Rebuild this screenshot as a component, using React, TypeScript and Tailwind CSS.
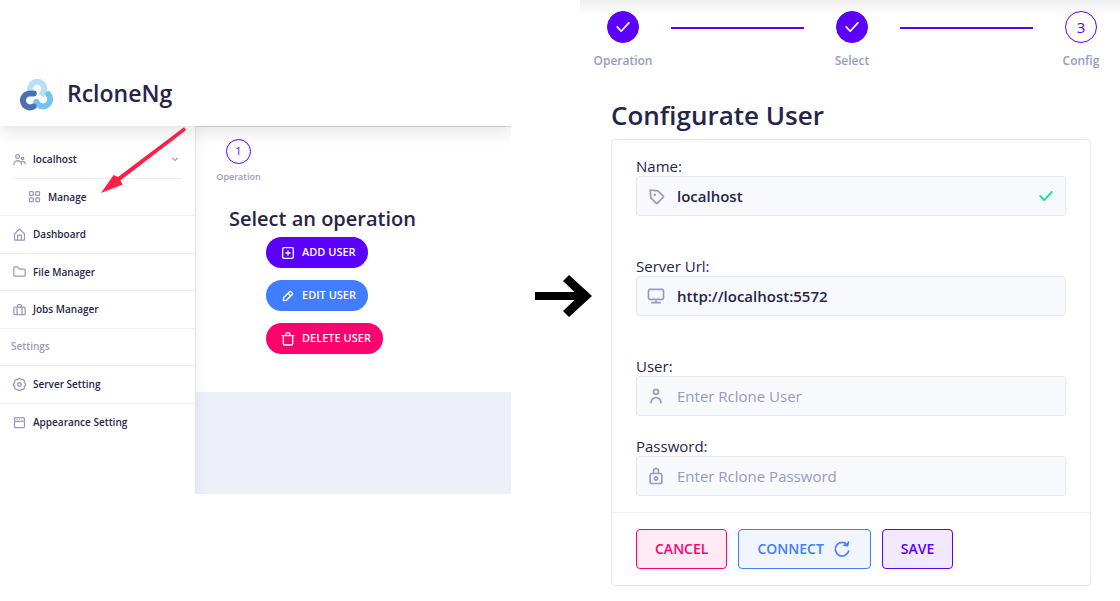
import type { ReactNode } from "react";

const icons = {
  people:
    "M9 11a4 4 0 1 0-4-4 4 4 0 0 0 4 4zm0-6a2 2 0 1 1-2 2 2 2 0 0 1 2-2zm8 8a3 3 0 1 0-3-3 3 3 0 0 0 3 3zm0-4a1 1 0 1 1-1 1 1 1 0 0 1 1-1zm0 5a5 5 0 0 0-3.06 1.05A7 7 0 0 0 2 20a1 1 0 0 0 2 0 5 5 0 0 1 10 0 1 1 0 0 0 2 0 6.9 6.9 0 0 0-.86-3.35A3 3 0 0 1 20 19a1 1 0 0 0 2 0 5 5 0 0 0-5-5z",
  grid: "M9 3H5a2 2 0 0 0-2 2v4a2 2 0 0 0 2 2h4a2 2 0 0 0 2-2V5a2 2 0 0 0-2-2zM5 9V5h4v4zM19 3h-4a2 2 0 0 0-2 2v4a2 2 0 0 0 2 2h4a2 2 0 0 0 2-2V5a2 2 0 0 0-2-2zm-4 6V5h4v4zM9 13H5a2 2 0 0 0-2 2v4a2 2 0 0 0 2 2h4a2 2 0 0 0 2-2v-4a2 2 0 0 0-2-2zm-4 6v-4h4v4zM19 13h-4a2 2 0 0 0-2 2v4a2 2 0 0 0 2 2h4a2 2 0 0 0 2-2v-4a2 2 0 0 0-2-2zm-4 6v-4h4v4z",
  home: "M20.42 10.18L12.71 2.3a1 1 0 0 0-1.42 0l-7.71 7.89A2 2 0 0 0 3 11.62V20a2 2 0 0 0 1.89 2h14.22A2 2 0 0 0 21 20v-8.38a2.07 2.07 0 0 0-.58-1.44zM10 20v-6h4v6zm9 0h-3v-7a1 1 0 0 0-1-1H9a1 1 0 0 0-1 1v7H5v-8.42l7-7.15 7 7.19z",
  folder:
    "M19.5 20.5h-15A2.47 2.47 0 0 1 2 18.07V5.93A2.47 2.47 0 0 1 4.5 3.5h4.6a1 1 0 0 1 .77.37l2.6 3.18h7A2.47 2.47 0 0 1 22 9.48v8.59a2.47 2.47 0 0 1-2.5 2.43zM4 13.76v4.31a.46.46 0 0 0 .5.43h15a.46.46 0 0 0 .5-.43V9.48a.46.46 0 0 0-.5-.43H12a1 1 0 0 1-.77-.37L8.63 5.5H4.5a.46.46 0 0 0-.5.43z",
  briefcase:
    "M19 7h-3V5.5A2.5 2.5 0 0 0 13.5 3h-3A2.5 2.5 0 0 0 8 5.5V7H5a3 3 0 0 0-3 3v8a3 3 0 0 0 3 3h14a3 3 0 0 0 3-3v-8a3 3 0 0 0-3-3zm-4 2v10H9V9zm-5-3.5a.5.5 0 0 1 .5-.5h3a.5.5 0 0 1 .5.5V7h-4zM4 18v-8a1 1 0 0 1 1-1h2v10H5a1 1 0 0 1-1-1zm16 0a1 1 0 0 1-1 1h-2V9h2a1 1 0 0 1 1 1z",
  browser:
    "M18 3H6a3 3 0 0 0-3 3v12a3 3 0 0 0 3 3h12a3 3 0 0 0 3-3V6a3 3 0 0 0-3-3zM6 5h12a1 1 0 0 1 1 1v3H5V6a1 1 0 0 1 1-1zm12 14H6a1 1 0 0 1-1-1v-7h14v7a1 1 0 0 1-1 1zM8 6a1 1 0 1 0 0 2 1 1 0 0 0 0-2zM12 6a1 1 0 1 0 0 2 1 1 0 0 0 0-2z",
  tag: "M12.87 22a1.84 1.84 0 0 1-1.29-.53l-6.41-6.42a1 1 0 0 1-.29-.61L4 5.09a1 1 0 0 1 .29-.8 1 1 0 0 1 .8-.29l9.35.88a1 1 0 0 1 .61.29l6.42 6.41a1.82 1.82 0 0 1 0 2.57l-7.32 7.32a1.82 1.82 0 0 1-1.28.53zm-6-8.11l6 6 7.05-7.05-6-6-7.81-.73zM10.5 9a1.5 1.5 0 1 0 0 3 1.5 1.5 0 0 0 0-3z",
  monitor:
    "M19 3H5a3 3 0 0 0-3 3v8a3 3 0 0 0 3 3h6v2H7a1 1 0 0 0 0 2h10a1 1 0 0 0 0-2h-4v-2h6a3 3 0 0 0 3-3V6a3 3 0 0 0-3-3zm1 11a1 1 0 0 1-1 1H5a1 1 0 0 1-1-1V6a1 1 0 0 1 1-1h14a1 1 0 0 1 1 1z",
  person:
    "M12 11a4 4 0 1 0-4-4 4 4 0 0 0 4 4zm0-6a2 2 0 1 1-2 2 2 2 0 0 1 2-2zm0 8a7 7 0 0 0-7 7 1 1 0 0 0 2 0 5 5 0 0 1 10 0 1 1 0 0 0 2 0 7 7 0 0 0-7-7z",
  lock: "M17 8h-1V6.11a4 4 0 1 0-8 0V8H7a3 3 0 0 0-3 3v8a3 3 0 0 0 3 3h10a3 3 0 0 0 3-3v-8a3 3 0 0 0-3-3zm-7-1.89A2.06 2.06 0 0 1 12 4a2.06 2.06 0 0 1 2 2.11V8h-4zM18 19a1 1 0 0 1-1 1H7a1 1 0 0 1-1-1v-8a1 1 0 0 1 1-1h10a1 1 0 0 1 1 1zM12 12a3 3 0 1 0 3 3 3 3 0 0 0-3-3zm0 4a1 1 0 1 1 1-1 1 1 0 0 1-1 1z",
  plusSquare:
    "M18 3H6a3 3 0 0 0-3 3v12a3 3 0 0 0 3 3h12a3 3 0 0 0 3-3V6a3 3 0 0 0-3-3zm1 15a1 1 0 0 1-1 1H6a1 1 0 0 1-1-1V6a1 1 0 0 1 1-1h12a1 1 0 0 1 1 1zM15 11h-2V9a1 1 0 0 0-2 0v2H9a1 1 0 0 0 0 2h2v2a1 1 0 0 0 2 0v-2h2a1 1 0 0 0 0-2z",
  edit: "M19.4 7.34L16.66 4.6A2 2 0 0 0 14 4.53l-9 9a2 2 0 0 0-.57 1.21L4 18.91a1 1 0 0 0 .29.8A1 1 0 0 0 5 20h.09l4.17-.38a2 2 0 0 0 1.21-.57l9-9a1.92 1.92 0 0 0-.07-2.71zM9.08 17.62l-3 .28.27-3L12 9.32l2.7 2.7zM16 10.68L13.32 8l1.95-2L18 8.73z",
  trash:
    "M21 6h-5V4.33A2.42 2.42 0 0 0 13.5 2h-3A2.42 2.42 0 0 0 8 4.33V6H3a1 1 0 0 0 0 2h1v11a3 3 0 0 0 3 3h10a3 3 0 0 0 3-3V8h1a1 1 0 0 0 0-2zM10 4.33c0-.16.21-.33.5-.33h3c.29 0 .5.17.5.33V6h-4zM18 19a1 1 0 0 1-1 1H7a1 1 0 0 1-1-1V8h12z",
  check:
    "M9.86 18a1 1 0 0 1-.73-.32l-4.86-5.17a1 1 0 1 1 1.46-1.37l4.12 4.39 8.41-9.2a1 1 0 1 1 1.48 1.34l-9.14 10a1 1 0 0 1-.73.33z",
  chevron:
    "M12 15.5a1 1 0 0 1-.71-.29l-4-4a1 1 0 1 1 1.42-1.42L12 13.1l3.3-3.18a1 1 0 1 1 1.38 1.44l-4 3.86a1 1 0 0 1-.68.28z",
};

type IconName = keyof typeof icons;

function Icon({ name, className }: { name: IconName; className: string }) {
  return (
    <svg viewBox="0 0 24 24" fill="currentColor" fillRule="evenodd" aria-hidden="true" className={className}>
      <path d={icons[name]} />
    </svg>
  );
}

function Gear({ className }: { className: string }) {
  return (
    <svg viewBox="1 1 22 22" fill="none" stroke="currentColor" strokeWidth="2" strokeLinejoin="round" aria-hidden="true" className={className}>
      <path d="M19.02 9.09A3.1 3.1 0 0 1 19.02 14.91 3.1 3.1 0 0 1 14.91 19.02 3.1 3.1 0 0 1 9.09 19.02 3.1 3.1 0 0 1 4.98 14.91 3.1 3.1 0 0 1 4.98 9.09 3.1 3.1 0 0 1 9.09 4.98 3.1 3.1 0 0 1 14.91 4.98 3.1 3.1 0 0 1 19.02 9.09z" />
      <circle cx="12" cy="12" r="2.6" />
    </svg>
  );
}

function Refresh({ className }: { className: string }) {
  return (
    <svg viewBox="0 0 24 24" fill="none" stroke="currentColor" strokeWidth="2" strokeLinecap="round" strokeLinejoin="round" aria-hidden="true" className={className}>
      <path d="M20 14.4A8.15 8.15 0 1 1 18.6 7.2M14.5 7.3l4.3.7.8-4.2" />
    </svg>
  );
}

function Logo() {
  return (
    <svg viewBox="0 -1 34 33" fill="none" aria-hidden="true" className="h-[33px] w-[34px] shrink-0">
      <g strokeWidth="6" strokeLinejoin="round">
        <path d="M10.4 11.4A7 7 0 1 1 23.8 12.2L21.2 16.8" stroke="#b5e1f8" />
        <path d="M28.2 15.2A7.2 7.2 0 1 1 17.8 25.2L16.4 22.8" stroke="#73c4f1" strokeLinecap="round" />
        <path d="M13.8 14.4H10.4A7 7 0 1 0 13.6 27.4" stroke="#4a72b0" strokeLinecap="round" />
      </g>
    </svg>
  );
}

function MenuItem({ icon, label, nested, arrow, last }: { icon: ReactNode; label: string; nested?: boolean; arrow?: boolean; last?: boolean }) {
  return (
    <li className={arrow ? "pr-[13px] pl-3" : last ? "" : "border-b border-[#edeff7]"}>
      <a
        href="#"
        className={
          "flex h-full items-center gap-[6px] " +
          (nested ? "pl-[27px]" : arrow ? "border-b border-[#edeff7]" : "pl-3")
        }
      >
        <span className="text-[#989bbd]">{icon}</span>
        <span className="text-[10px] leading-4 font-semibold">{label}</span>
        {arrow && <Icon name="chevron" className="ml-auto size-[14px] text-[#989bbd]" />}
      </a>
    </li>
  );
}

function Sidebar() {
  const size = "size-[15px]";
  return (
    <nav className="z-[1] w-[196px] shrink-0 border-r border-[#e4e6f0] bg-white pt-[15px] shadow-[2px_0_10px_rgba(0,0,0,0.06)]">
      <ul className="grid h-[300px] grid-rows-8">
        <MenuItem arrow icon={<Icon name="people" className={size} />} label="localhost" />
        <MenuItem nested icon={<Icon name="grid" className={size} />} label="Manage" />
        <MenuItem icon={<Icon name="home" className={size} />} label="Dashboard" />
        <MenuItem icon={<Icon name="folder" className={size} />} label="File Manager" />
        <MenuItem icon={<Icon name="briefcase" className={size} />} label="Jobs Manager" />
        <li className="flex items-center border-b border-[#edeff7] pl-[11px] text-[10px] font-semibold text-[#989bbd]">Settings</li>
        <MenuItem icon={<Gear className={size} />} label="Server Setting" />
        <MenuItem last icon={<Icon name="browser" className={size} />} label="Appearance Setting" />
      </ul>
    </nav>
  );
}

function OperationButton({ icon, label, color }: { icon: IconName; label: string; color: string }) {
  return (
    <button type="button" className={"flex h-[31px] items-center gap-[6px] rounded-full pr-3 pl-[14px] text-[11px] font-semibold text-white " + color}>
      <Icon name={icon} className="size-4" />
      {label}
    </button>
  );
}

function Step({ label, children, done }: { label: string; children: ReactNode; done?: boolean }) {
  return (
    <li className="flex w-[60px] shrink-0 flex-col items-center gap-2">
      <span className={"flex size-8 items-center justify-center rounded-full border border-[#5b00ff] text-[15px] " + (done ? "bg-[#5b00ff] text-white" : "bg-white text-[#5b00ff]")}>
        {children}
      </span>
      <span className="text-[12px] leading-5 font-semibold text-[#989bbd]">{label}</span>
    </li>
  );
}

function Field({ id, label, icon, value, placeholder, type = "text", valid }: { id: string; label: string; icon: IconName; value?: string; placeholder?: string; type?: string; valid?: boolean }) {
  return (
    <div>
      <label htmlFor={id} className="block text-[15px] leading-5">{label}</label>
      <div className="flex h-10 items-center gap-[11px] rounded-[4px] border border-[#e4e6f2] bg-[#f7f9fd] px-[9px]">
        <Icon name={icon} className="size-5 shrink-0 text-[#989bbd]" />
        <input
          id={id}
          type={type}
          defaultValue={value}
          placeholder={placeholder}
          className="min-w-0 flex-1 bg-transparent text-[15px] leading-6 font-semibold outline-none placeholder:font-normal placeholder:text-[#989bbd]"
        />
        {valid && <Icon name="check" className="size-5 shrink-0 text-[#00e096]" />}
      </div>
    </div>
  );
}

export default function App() {
  return (
    <main className="grid grid-cols-[511fr_69fr_540fr] bg-white font-['Open_Sans','Noto_Sans',sans-serif] text-[#25254a]">
      <section className="relative min-w-0 self-start overflow-hidden">
        <header className="relative z-10 flex h-[126px] items-end gap-[6px] bg-white pb-[15px] pl-5 shadow-[0_6px_16px_rgba(0,0,0,0.11)]">
          <Logo />
          <h1 className="flex h-9 items-center border-l border-[#f6f7fb] pl-[6px] text-[23px] leading-9 font-semibold">RcloneNg</h1>
        </header>
        <div className="flex h-[368px]">
          <Sidebar />
          <div className="min-w-0 flex-1 bg-[#edf0f8]">
            <div className="flex h-[266px] flex-col items-start border-t border-[#d6d9e6] bg-white pt-3 pl-5">
              <div className="flex w-[45px] flex-col items-center gap-[5px]">
                <span className="flex size-[25px] items-center justify-center rounded-full border border-[#5b00ff] text-[11px] text-[#5b00ff]">1</span>
                <span className="text-[9px] leading-4 font-semibold text-[#989bbd]">Operation</span>
              </div>
              <h2 className="mt-5 ml-[13px] text-[20px] leading-7 font-semibold">Select an operation</h2>
              <div className="mt-1 ml-[50px] flex flex-col items-start gap-3">
                <OperationButton icon="plusSquare" label="ADD USER" color="bg-[#5b00ff]" />
                <OperationButton icon="edit" label="EDIT USER" color="bg-[#427cff]" />
                <OperationButton icon="trash" label="DELETE USER" color="bg-[#ff006f]" />
              </div>
            </div>
          </div>
        </div>
        <svg viewBox="0 0 86 68" aria-hidden="true" className="absolute top-[126px] left-[101px] z-20 h-[68px] w-[86px]" fill="#ff1e46">
          <path d="M83 1.2 85.2 4 19.4 54.4 21.8 58.6 0 67 12.6 49 17 51z" />
        </svg>
      </section>

      <div className="z-10 flex min-w-0 items-start pt-[275px] pl-6">
        <svg viewBox="0 0 57 42" aria-hidden="true" className="h-[42px] w-[57px] shrink-0" fill="#000">
          <path d="M0 17H39.5L28 6 34 0 57 21 34 42 28 36 39.5 25H0z" />
        </svg>
      </div>

      <section className="min-w-0 bg-[linear-gradient(to_bottom,#f0f0f0,#ffffff_16px)] pt-[11px]">
        <ol className="flex pr-[9px] pl-[13px]">
          <Step done label="Operation"><Icon name="check" className="size-5" /></Step>
          <li aria-hidden="true" className="mx-[18px] mt-4 h-[2px] flex-1 bg-[#5b00ff]" />
          <Step done label="Select"><Icon name="check" className="size-5" /></Step>
          <li aria-hidden="true" className="mx-[18px] mt-4 h-[2px] flex-1 bg-[#5b00ff]" />
          <Step label="Config">3</Step>
        </ol>
        <div className="pt-7 pr-[29px] pl-[31px]">
          <h2 className="text-[26px] leading-8 font-semibold">Configurate User</h2>
          <form className="mt-2 rounded-[4px] border border-[#e4e6f2]">
            <div className="flex flex-col gap-5 px-6 py-4">
              <div className="flex flex-col gap-10">
                <Field id="name" label="Name:" icon="tag" value="localhost" valid />
                <Field id="url" label="Server Url:" icon="monitor" value="http://localhost:5572" />
                <Field id="user" label="User:" icon="person" placeholder="Enter Rclone User" />
              </div>
              <Field id="password" label="Password:" icon="lock" type="password" placeholder="Enter Rclone Password" />
            </div>
            <div className="flex gap-[11px] border-t border-[#edeff7] px-6 py-4 text-[14px] leading-4 font-semibold">
              <button type="button" className="h-10 rounded-[4px] border border-[#ff006f] bg-[#ffebf4] px-[18px] text-[#ff006f]">CANCEL</button>
              <button type="button" className="flex h-10 items-center gap-2 rounded-[4px] border border-[#427cff] bg-[#f0f5ff] px-[18px] text-[#427cff]">
                CONNECT
                <Refresh className="size-5" />
              </button>
              <button type="button" className="h-10 rounded-[4px] border border-[#5b00ff] bg-[#f1e9ff] px-[18px] text-[#5b00ff]">SAVE</button>
            </div>
          </form>
        </div>
      </section>
    </main>
  );
}
